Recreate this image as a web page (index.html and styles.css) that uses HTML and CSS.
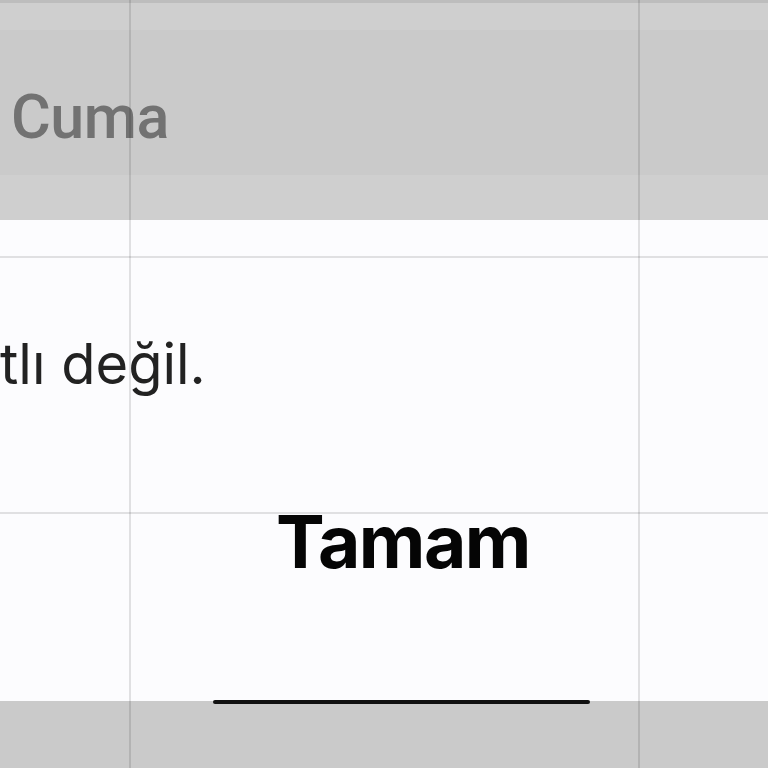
FILE: index.html
```html
<!DOCTYPE html>
<html lang="tr">
<head>
<title>Takvim</title>
<meta charset="utf-8">
<meta name="viewport" content="width=device-width, initial-scale=1">
<link rel="stylesheet" href="styles.css">
</head>
<body>

<div class="screen">
  <header class="week-head">
    <div class="edge"></div>
    <div class="band-light"></div>
    <div class="band-main">
      <span class="day">Cuma</span>
    </div>
    <div class="band-light tall"></div>
  </header>

  <div class="dialog">
    <p class="message">tlı değil.</p>
    <div class="actions">
      <span class="ok">Tamam</span>
    </div>
  </div>
  <div class="ok-edge"></div>

  <!-- calendar grid lines seen through the overlay -->
  <div class="vline v1"></div>
  <div class="vline v2"></div>
  <div class="hline h1"></div>
  <div class="hline h2"></div>
</div>

</body>
</html>
```

FILE: styles.css
```css
* {
  box-sizing: border-box;
}

body {
  margin: 0;
  background-color: #cacaca;
  font-family: Inter, "Noto Sans", sans-serif;
}

.screen {
  position: relative;
  width: 768px;
  height: 768px;
  overflow: hidden;
}

/* Header of the week view, greyed by the overlay */
.week-head {
  display: flex;
  flex-direction: column;
}

.edge {
  height: 3px;
  background-color: #bdbdbd;
}

.band-light {
  height: 27px;
  background-color: #cfcfcf;
}

.band-light.tall {
  height: 45px;
}

.band-main {
  height: 145px;
  background-color: #cacaca;
  padding-top: 57px;
  padding-left: 11px;
}

.day {
  display: block;
  font-family: Roboto, "Liberation Sans", sans-serif;
  font-weight: 500;
  font-size: 61px;
  line-height: 60px;
  letter-spacing: -0.5px;
  color: #727272;
}

/* Alert dialog */
.dialog {
  height: 481px;
  background-color: #fcfcfe;
  padding-top: 111px;
}

.message {
  margin: 0;
  font-size: 56px;
  line-height: 67px;
  color: #222222;
  white-space: nowrap;
}

.actions {
  display: flex;
  justify-content: center;
  padding-top: 107px;
  padding-left: 38px;
}

.ok {
  font-weight: 700;
  font-size: 73px;
  line-height: 73px;
  letter-spacing: -1.5px;
  color: #050505;
}

.ok-edge {
  width: 377px;
  height: 4px;
  margin-left: 213px;
  margin-top: -1px;
  background-color: #111111;
  border-radius: 2px;
}

/* Grid lines */
.vline {
  position: absolute;
  top: 0;
  bottom: 0;
  width: 2px;
  background-color: rgba(0, 0, 0, 0.11);
}

.v1 { left: 129px; }
.v2 { left: 638px; }

.hline {
  position: absolute;
  left: 0;
  right: 0;
  height: 2px;
  background-color: rgba(0, 0, 0, 0.11);
}

.h1 { top: 256px; }
.h2 { top: 512px; }
```
